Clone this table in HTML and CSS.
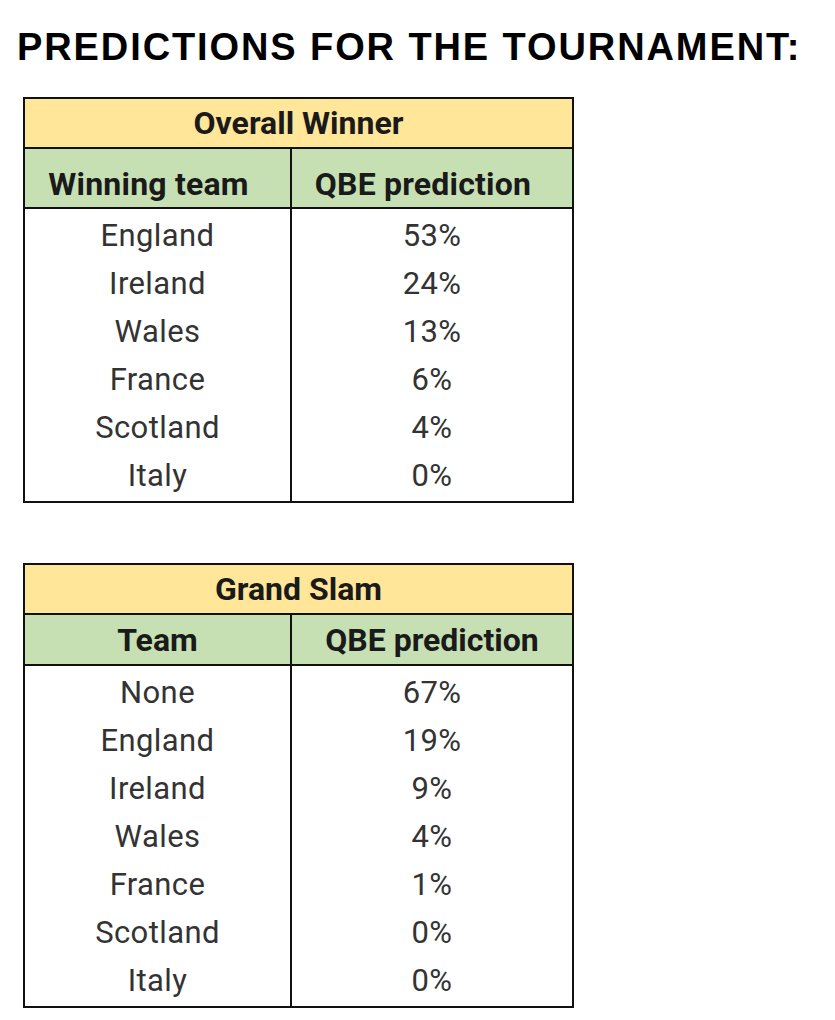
FILE: index.html
```html
<!DOCTYPE html>
<html>
<head>
<meta charset="utf-8">
<link rel="stylesheet" href="styles.css">
</head>
<body>
<div class="page">
  <h1 class="title">PREDICTIONS FOR THE TOURNAMENT:</h1>

  <table class="pred pred-winner">
    <colgroup><col class="col-a"><col class="col-b"></colgroup>
    <thead>
      <tr class="row-title"><th colspan="2">Overall Winner</th></tr>
      <tr class="row-head tall"><th>Winning team</th><th>QBE prediction</th></tr>
    </thead>
    <tbody>
      <tr><td>England</td><td>53%</td></tr>
      <tr><td>Ireland</td><td>24%</td></tr>
      <tr><td>Wales</td><td>13%</td></tr>
      <tr><td>France</td><td>6%</td></tr>
      <tr><td>Scotland</td><td>4%</td></tr>
      <tr><td>Italy</td><td>0%</td></tr>
    </tbody>
  </table>

  <table class="pred pred-slam">
    <colgroup><col class="col-a"><col class="col-b"></colgroup>
    <thead>
      <tr class="row-title"><th colspan="2">Grand Slam</th></tr>
      <tr class="row-head"><th>Team</th><th>QBE prediction</th></tr>
    </thead>
    <tbody>
      <tr><td>None</td><td>67%</td></tr>
      <tr><td>England</td><td>19%</td></tr>
      <tr><td>Ireland</td><td>9%</td></tr>
      <tr><td>Wales</td><td>4%</td></tr>
      <tr><td>France</td><td>1%</td></tr>
      <tr><td>Scotland</td><td>0%</td></tr>
      <tr><td>Italy</td><td>0%</td></tr>
    </tbody>
  </table>
</div>
</body>
</html>
```
FILE: styles.css
```css
html, body {
  margin: 0;
  padding: 0;
  background: #ffffff;
}

.page {
  padding: 27px 0 0 23px;
}

.title {
  margin: 0 0 30px -6px;
  font-family: "Liberation Sans", Arial, sans-serif;
  font-weight: 700;
  font-size: 38px;
  line-height: 40px;
  letter-spacing: 1.9px;
  color: #000;
}

.pred {
  border-collapse: collapse;
  width: 551px;
  font-family: Roboto, "Liberation Sans", sans-serif;
  table-layout: fixed;
}

.pred .col-a { width: 267px; }

.pred-slam {
  margin-top: 60px;
}

.pred th,
.pred td {
  text-align: center;
  padding: 0;
}

.row-title th {
  background: #ffe699;
  height: 48px;
  border: 2px solid #111;
  font-weight: 700;
  font-size: 32px;
  color: #1a1a1a;
}

.row-head th {
  background: #c6e0b4;
  height: 49px;
  border: 2px solid #111;
  font-weight: 700;
  font-size: 32px;
  color: #1a1a1a;
}

.row-head.tall th {
  height: 46px;
  padding: 12px 18px 0 0;
  letter-spacing: 0.2px;
}

.pred tbody td {
  height: 48px;
  font-size: 31px;
  letter-spacing: 0.4px;
  color: #333333;
  border-left: 2px solid #111;
  border-right: 2px solid #111;
}

.pred tbody tr:first-child td { padding-top: 2px; }
.pred tbody tr:last-child td {
  padding-bottom: 2px;
  border-bottom: 2px solid #111;
}
```
